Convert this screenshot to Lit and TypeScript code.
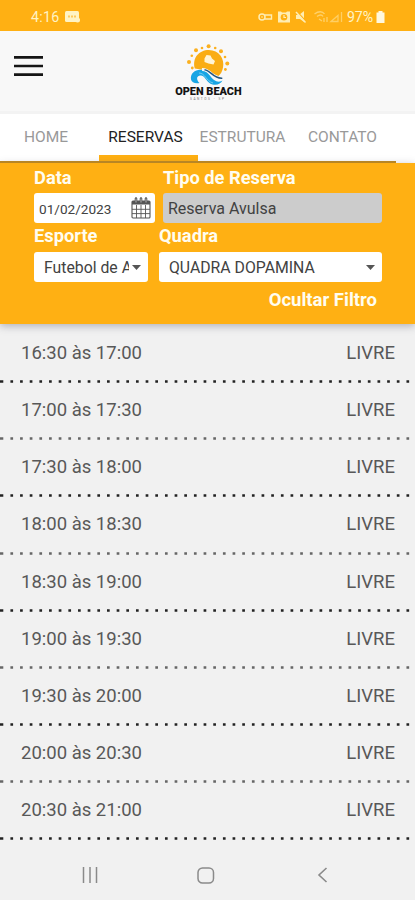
import { LitElement, html, css, svg } from "lit";
import { customElement } from "lit/decorators.js";

const SLOTS = [
  "16:30 às 17:00", "17:00 às 17:30", "17:30 às 18:00",
  "18:00 às 18:30", "18:30 às 19:00", "19:00 às 19:30",
  "19:30 às 20:00", "20:00 às 20:30", "20:30 às 21:00",
];

// Sun rays: centre x, centre y, radius
const RAYS = [
  [192.3, 68, 1.4], [189, 62, 2], [191.8, 55.8, 1.3], [196, 50.3, 2], [202, 48, 1.3], [208.6, 46.2, 2],
  [215.2, 48, 1.3], [221, 51.2, 2], [225, 57, 1.3], [227.3, 63.6, 2], [225.4, 69.5, 1.4],
];

@customElement("app-root")
export class AppRoot extends LitElement {
  static styles = css`
    :host { display: flex; flex-direction: column; width: 415px; height: 900px; overflow: hidden;
      background: #f1f1f1; font-family: Roboto, "Liberation Sans", sans-serif; color: #585858; }
    * { box-sizing: border-box; }
    svg { display: block; flex: none; }
    .status { height: 31px; flex: none; background: #ffb013; color: #fff3c4; display: flex;
      align-items: center; justify-content: space-between; padding: 3px 30px 0 31px; font-size: 14.2px; }
    .group { display: flex; align-items: center; }
    .clock { width: 34px; letter-spacing: .3px; }
    .pct { margin-left: 3px; width: 29px; letter-spacing: -.1px; }
    .header { height: 80px; flex: none; background: #f8f8f8; display: flex; align-items: flex-start; }
    .menu { margin: 24px 0 0 14px; }
    .logo { margin: 9px 0 0 129px; overflow: visible; }
    .brand { font-weight: 900; font-size: 11.6px; }
    .sub { font-size: 3.2px; }
    .tabs { height: 52px; flex: none; background: #fff; border-top: 3px solid #f3f3f3; display: flex;
      font-size: 15.5px; color: #999; width: 415px; }
    .tab { height: 48px; padding-top: 14px; line-height: 18px; white-space: nowrap; text-align: center; }
    .home { width: 99px; padding-right: 7px; }
    .reservas { width: 99px; color: #222; border-bottom: 7px solid #ffb013; padding-right: 6px; }
    .estrutura { width: 91px; padding-right: 2px; }
    .contato { width: 108px; padding-right: 1px; }
    .line { width: 396px; height: 2px; flex: none; background: #b88624; margin-top: -2px; z-index: 1; }
    .filter { height: 161px; flex: none; background: #ffb013; padding: 4px 33px 0 34px; color: #fffdf0;
      font-weight: 700; font-size: 18.3px; box-shadow: 0 2px 8px rgba(70,70,90,.38); }
    .cols { display: grid; }
    .c1 { grid-template-columns: 129px 219px; }
    .c2 { grid-template-columns: 125px 223px; }
    .label { height: 26px; line-height: 21px; white-space: nowrap; }
    .c2 .label { height: 29px; line-height: 26px; }
    .box { height: 30px; border-radius: 3px; background: #fff; color: #424242; font-weight: 400; font-size: 15.8px;
      display: flex; align-items: center; white-space: nowrap; overflow: hidden; }
    .date { width: 121px; font-size: 13.6px; padding: 2px 4px 0 5px; justify-content: space-between; }
    .date svg { margin-top: -3px; }
    .gray { background: #ccc; padding-left: 5px; font-size: 16px; }
    .select { padding: 0 7px 0 10px; justify-content: space-between; }
    .sport { width: 114px; }
    .clip { overflow: hidden; width: 85px; }
    .hide { text-align: right; padding-right: 5px; line-height: 22px; margin-top: 7px; font-size: 18.5px; }
    .list { height: 516px; flex: none; padding-top: 1px; }
    .row { height: 57.15px; padding: 17px 20px 0 21px; display: flex; justify-content: space-between;
      font-size: 18.5px; line-height: 22px; position: relative; }
    .dots { position: absolute; left: 0; bottom: -1px; }
    .nav { flex: 1; display: flex; padding: 27px 87px 0 82px; }
    .square { margin: 0 102px 0 99px; }
  `;

  private arrow() {
    return html`<svg width="9" height="5" viewBox="0 0 9 5"><path d="M0 0h9L4.5 5z" fill="#555"/></svg>`;
  }

  private calendar() {
    return html`<svg width="20" height="22" viewBox="0 0 20 22" fill="none" stroke="#555">
      <rect x="1" y="4" width="18" height="17" rx="1" stroke-width="1.1"/>
      <path d="M1 5.800h18" stroke-width="3.600"/><path d="M5 1.500v4M10 1.500v4M15 1.500v4" stroke-width="2.600" stroke-linecap="round"/>
      <path d="M5 1.500v4M10 1.500v4M15 1.500v4" stroke="#ccc" stroke-width=".8"/>
      <path d="M5.500 8v13M10 8v13M14.500 8v13M1 12.300h18M1 16.600h18" stroke-width=".9"/></svg>`;
  }

  private logo() {
    return html`<svg class="logo" width="72" height="63" viewBox="172 40 72 63">
      ${RAYS.map(([x, y, r]) => svg`<circle cx=${x} cy=${y} r=${r} fill="#fbb01f"/>`)}
      <path d="M194.800 68.500C192 58 199 50 208.800 50C219 50 225 59 223 67.500C222.300 71.500 220.500 74.500 218.500 76L204 70Z" fill="#faad14"/>
      <path d="M204.500 58.500l2-3.500 4 .5 1.500 3 3 2.500-1.500 3.500-5-1-4-1.500z" fill="#fff4d6"/>
      <path d="M191 79.500C190 73 196 69 202 70C209 71 211 80 217 81.500C219.500 82 221.500 81.300 222.500 80.300C221 84 217 85.500 212.500 84.500C206.500 83 206 76.500 201 75.500C197 75 195.500 79 199.500 83C195.500 84 191.500 82.500 191 79.500Z" fill="#18a5e4"/>
      <path d="M199 73c6 0 7 8 14 10" fill="none" stroke="#8ad6f5" stroke-width=".8"/>
      <path d="M202 69.500C211 69 212.500 79.500 222.500 79" fill="none" stroke="#f8f8f8" stroke-width="3"/>
      <path d="M204.500 69.700C211 70.500 213.500 79 222.300 78.200" fill="none" stroke="#23557f" stroke-width="1.500"/>
      <text class="brand" x="175.200" y="95.200" textLength="66.500" lengthAdjust="spacingAndGlyphs" fill="#131313">OPEN BEACH</text>
      <text class="sub" x="190" y="99.500" textLength="34" fill="#777">SANTOS - SP</text>
    </svg>`;
  }

  render() {
    return html`
      <div class="status">
        <div class="group"><span class="clock">4:16</span>
          <svg width="15" height="12" viewBox="0 0 15 12"><rect x="0" y="0" width="14" height="11" rx="1.500" fill="#fff3c4"/>
            <path d="M3 5.500h2M6 5.500h2M9 5.500h2" stroke="#ffc95a" stroke-width="2"/><circle cx="12.500" cy="9" r="2.500" fill="#fff3c4"/></svg>
        </div>
        <div class="group">
          <svg width="86" height="14" viewBox="0 0 86 14" fill="none" stroke="#ffedb3">
            <circle cx="4" cy="7" r="3" stroke-width="1.500"/><circle cx="4" cy="7" r=".8" fill="#ffedb3" stroke="none"/>
            <path d="M7 5h6.500v4H7" stroke-width="1.400"/>
            <path d="M20 1.500h3l1 1h4l1-1h3v11H20z" fill="#ffedb3" stroke="none"/><circle cx="26" cy="7.200" r="3.300" fill="#ffb013" stroke="none"/>
            <path d="M26 5v2.500h2" stroke-width="1.200"/>
            <path d="M38 5h3l5-4v11l-4-3h-4z" fill="#ffedb3" stroke="none"/><path d="M38.500 1l10 11" stroke="#ffb013" stroke-width="1.200"/><path d="M38 2l9.500 10.500" stroke-width="1.500"/>
            <path d="M56.500 4c4-3 8-3 10 0M59 6.500c2.500-2 5-2 6 0M61 9l3 2M66 8v4M69 7v5" opacity=".55" stroke-width="1.300"/>
            <path d="M73 11.500l7-6v6zM83.500 2v10" opacity=".5" stroke-width="1.300"/>
          </svg>
          <span class="pct">97%</span>
          <svg width="9" height="12" viewBox="0 0 9 12"><path d="M2.500 0h4v1.500H8.500V12H.5V1.500h2z" fill="#fff8df"/></svg>
        </div>
      </div>
      <div class="header">
        <svg class="menu" width="29" height="23" viewBox="0 0 29 23"><path d="M0 2.300h29M0 11h29M0 19.700h29" stroke="#151515" stroke-width="2.700"/></svg>
        ${this.logo()}
      </div>
      <div class="tabs">
        <div class="tab home">HOME</div><div class="tab reservas">RESERVAS</div>
        <div class="tab estrutura">ESTRUTURA</div><div class="tab contato">CONTATO</div>
      </div>
      <div class="line"></div>
      <div class="filter">
        <div class="cols c1">
          <div class="label">Data</div><div class="label">Tipo de Reserva</div>
          <div class="box date">01/02/2023 ${this.calendar()}</div>
          <div class="box gray">Reserva Avulsa</div>
        </div>
        <div class="cols c2">
          <div class="label">Esporte</div><div class="label">Quadra</div>
          <div class="box select sport"><span class="clip">Futebol de Areia</span>${this.arrow()}</div>
          <div class="box select">QUADRA DOPAMINA ${this.arrow()}</div>
        </div>
        <div class="hide">Ocultar Filtro</div>
      </div>
      <div class="list">
        ${SLOTS.map((s, i) => html`<div class="row"><span>${s}</span><span>LIVRE</span>
          <svg class="dots" width="415" height="3" viewBox="0 0 415 3">
            <path d="M0 1.500h3.300" stroke=${i % 2 ? "#666" : "#222"} stroke-width="2.500"/>
            <path d="M10.400 1.500H410" stroke=${i % 2 ? "#666" : "#222"} stroke-width="2.500" stroke-dasharray="2.700 6.960"/>
          </svg></div>`)}
      </div>
      <div class="nav">
        <svg width="16" height="16" viewBox="0 0 16 16"><path d="M1.500 0v16M8 0v16M14.500 0v16" stroke="#8a8a8a" stroke-width="1.500"/></svg>
        <svg class="square" width="18" height="17" viewBox="0 0 18 17"><rect x="1" y="1" width="15.500" height="15" rx="4.500" fill="none" stroke="#8a8a8a" stroke-width="1.500"/></svg>
        <svg width="11" height="16" viewBox="0 0 11 16"><path d="M9.500 1L2 8l7.500 7" fill="none" stroke="#8a8a8a" stroke-width="1.600"/></svg>
      </div>`;
  }
}
